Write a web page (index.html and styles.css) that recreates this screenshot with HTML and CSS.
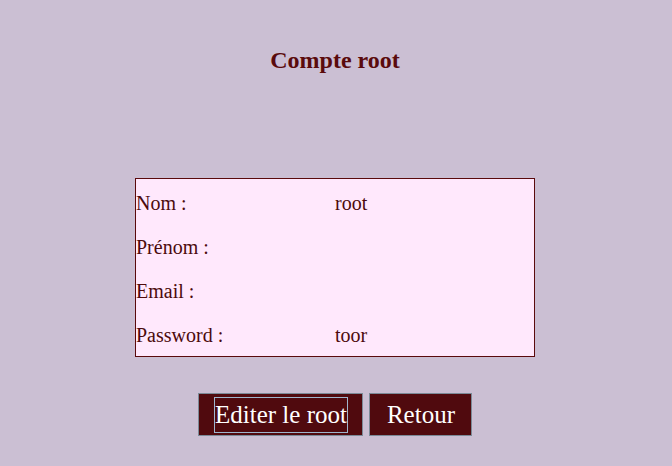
FILE: index.html
```html
<!DOCTYPE html>
<html lang="fr">
<head>
<meta charset="utf-8">
<title>Compte root</title>
<link rel="stylesheet" href="styles.css">
</head>
<body>
<main class="page">
  <h2 class="title">Compte root</h2>
  <div class="card">
    <div class="row"><span class="label">Nom :</span><span class="value">root</span></div>
    <div class="row"><span class="label">Prénom :</span><span class="value"></span></div>
    <div class="row"><span class="label">Email :</span><span class="value"></span></div>
    <div class="row"><span class="label">Password :</span><span class="value">toor</span></div>
  </div>
  <div class="actions">
    <button class="btn btn-focus"><span class="btn-text">Editer le root</span></button>
    <button class="btn btn-back"><span class="btn-text">Retour</span></button>
  </div>
</main>
</body>
</html>
```

FILE: styles.css
```css
html, body {
  margin: 0;
  padding: 0;
  background: #cbbfd3;
}
body {
  font-family: "Liberation Serif", "Times New Roman", serif;
  color: #4c0a0c;
}
.page {
  width: 670px;
  padding-top: 46px;
  display: flex;
  flex-direction: column;
  align-items: center;
}
.title {
  margin: 0;
  font-size: 24px;
  font-weight: bold;
  line-height: 28px;
  color: #5a0a0c;
}
.card {
  margin-top: 104px;
  width: 398px;
  border: 1px solid #5a0a0c;
  background: #ffe8fc;
  padding-top: 1px;
}
.row {
  box-sizing: border-box;
  height: 44px;
  padding-top: 2px;
  display: grid;
  grid-template-columns: 199px 1fr;
  align-items: center;
  font-size: 20px;
  line-height: 23px;
}
.actions {
  margin-top: 36px;
  display: flex;
  gap: 6px;
}
.btn {
  margin: 0;
  background: #500a0e;
  color: #ffffff;
  border: 1px solid #7b8a97;
  padding: 3px 15px 2px;
  font-family: "Liberation Serif", "Times New Roman", serif;
  font-size: 25px;
  cursor: pointer;
}
.btn-focus {
  padding: 3px 14px 2px 15px;
}
.btn-back {
  padding: 3px 15px 2px 16px;
}
.btn-text {
  display: block;
  line-height: 34px;
  border: 1px solid transparent;
}
.btn-focus .btn-text {
  border-color: #9fb5cc;
}
```
